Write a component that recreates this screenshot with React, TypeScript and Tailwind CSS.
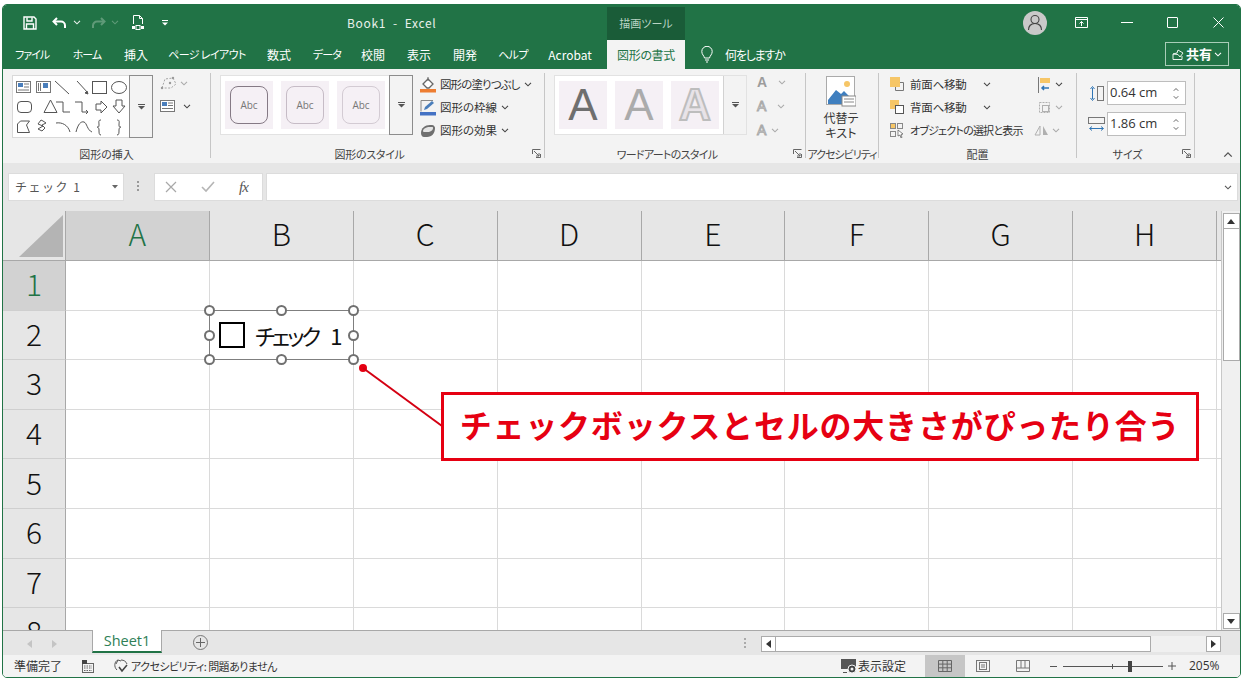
import React from 'react';

const Chev: React.FC<{ className?: string }> = ({ className }) => (
  <svg width="8" height="5" viewBox="0 0 8 5" className={className}><path d="M1 .8l3 3 3-3" fill="none" stroke="currentColor" strokeWidth="1.1" /></svg>
);

const MoreIcon = () => (
  <svg width="7" height="6" viewBox="0 0 7 6"><path d="M0 .5h7" stroke="#555" /><path d="M0 2h7L3.500 5.500z" fill="#555" /></svg>
);

const Launcher: React.FC<{ className?: string }> = ({ className }) => (
  <svg width="9" height="9" viewBox="0 0 9 9" className={className}><path d="M.5 5V.5H8.500M4 8.500h4.500V5" fill="none" stroke="#666" /><path d="M2 2l5 5M7 4v3H4" fill="none" stroke="#666" /></svg>
);

const tabs = [
  { label: 'ファイル', w: 'w-[58px] text-[11px] tracking-[-1px]' },
  { label: 'ホーム', w: 'w-[52px] text-[11px] tracking-[-1px]' },
  { label: '挿入', w: 'w-[46px]' },
  { label: 'ページ レイアウト', w: 'w-[96px] text-[11px] tracking-[-0.6px]' },
  { label: '数式', w: 'w-[48px]' },
  { label: 'データ', w: 'w-[48px] text-[11px] tracking-[-0.8px]' },
  { label: '校閲', w: 'w-[44px]' },
  { label: '表示', w: 'w-[48px]' },
  { label: '開発', w: 'w-[44px]' },
  { label: 'ヘルプ', w: 'w-[52px] text-[11px] tracking-[-0.6px]' },
  { label: 'Acrobat', w: 'w-[62px]' },
];

const TitleBar = () => (
  <div className="h-[35px] flex items-center bg-[#217346] text-white shrink-0">
    <svg width="14" height="14" viewBox="0 0 14 14" className="ml-[20px]"><path d="M1 1h10l2 2v10H1z" fill="none" stroke="#fff" strokeWidth="1.4" /><path d="M4 1.500v3.500h5V1.500M3.500 13V8h7v5" fill="none" stroke="#fff" strokeWidth="1.4" /></svg>
    <svg width="15" height="12" viewBox="0 0 15 12" className="ml-[15px]"><path d="M5 1L1.500 4.500 5 8" fill="none" stroke="#fff" strokeWidth="2" /><path d="M2 4.500h7a4 4 0 0 1 4 4V11" fill="none" stroke="#fff" strokeWidth="2" /></svg>
    <Chev className="ml-[6px] text-white/90" />
    <svg width="15" height="12" viewBox="0 0 15 12" className="ml-[10px]"><path d="M10 1l3.500 3.500L10 8" fill="none" stroke="#5f9a78" strokeWidth="2" /><path d="M13 4.500H6a4 4 0 0 0-4 4V11" fill="none" stroke="#5f9a78" strokeWidth="2" /></svg>
    <Chev className="ml-[5px] text-[#5f9a78]" />
    <svg width="14" height="16" viewBox="0 0 14 16" className="ml-[12px]"><path d="M2.500 9V.500h6l3 3V9" fill="none" stroke="#fff" /><path d="M8.500.500v3h3" fill="none" stroke="#fff" /><rect x="1" y="11" width="3" height="3" fill="#fff" /><rect x="5" y="10.500" width="4" height="4" fill="none" stroke="#fff" /><rect x="10" y="11" width="3" height="3" fill="#fff" /></svg>
    <svg width="6" height="6" viewBox="0 0 6 6" className="ml-[17px]"><path d="M0 .5h6" stroke="#fff" /><path d="M0 2.500h6L3 5.500z" fill="#fff" /></svg>
    <div className="ml-[179px] w-[89px] text-[12px] tracking-[0.7px] whitespace-nowrap text-[#e8f0eb]">Book1&nbsp; -&nbsp; Excel</div>
    <div className="ml-[171px] w-[78px] h-[33px] self-end bg-[#1a5c38] flex items-center justify-center text-[11px] text-[#b9d4c4]">描画ツール</div>
    <div className="ml-[338px] w-[24px] h-[24px] rounded-full bg-[#c9c9c9] flex items-center justify-center">
      <svg width="16" height="17" viewBox="0 0 16 17"><circle cx="8" cy="5.500" r="4" fill="none" stroke="#444" strokeWidth="1.1" /><path d="M1.500 16c0-4 2.500-6.500 6.500-6.500s6.500 2.500 6.500 6.500" fill="none" stroke="#444" strokeWidth="1.1" /></svg>
    </div>
    <svg width="13" height="11" viewBox="0 0 13 11" className="ml-[28px]"><path d="M.5.500h12v10H.500zM.5 2.500h12" fill="none" stroke="#fff" /><path d="M6.500 9V4.500M4.500 6.500l2-2 2 2" fill="none" stroke="#fff" /></svg>
    <div className="ml-[33px] w-[12px] h-px bg-white" />
    <div className="ml-[34px] w-[11px] h-[11px] border border-white rounded-[1px]" />
    <svg width="11" height="11" viewBox="0 0 11 11" className="ml-[35px]"><path d="M.5.500l10 10M10.500.500l-10 10" stroke="#fff" /></svg>
  </div>
);

const TabBar = () => (
  <div className="h-[29px] flex bg-[#217346] text-white text-[12px] shrink-0">
    {tabs.map((t) => (
      <div key={t.label} className={`${t.w} flex items-center justify-center whitespace-nowrap`}>{t.label}</div>
    ))}
    <div className="ml-[6px] w-[78px] bg-[#f3f3f3] text-[#217346] flex items-center justify-center tracking-[-0.3px]">図形の書式</div>
    <svg width="12" height="17" viewBox="0 0 12 17" className="ml-[16px] self-center"><path d="M3.500 12C3 9.500.8 8.500.8 5.500a5.200 5.200 0 0 1 10.400 0c0 3-2.200 4-2.700 6.500z" fill="none" stroke="#fff" /><path d="M4 14h4M5 16h2" stroke="#fff" /></svg>
    <div className="ml-[12px] self-center whitespace-nowrap tracking-[-1.200px]">何をしますか</div>
    <div className="ml-auto mr-[11px] mt-[2px] w-[64px] h-[24px] border border-[#a9cdb8] flex items-center justify-center gap-[2px]">
      <svg width="12" height="11" viewBox="0 0 12 11"><path d="M1 5v5.500h9V7M1 5l4-1 1-3 5 3-3 4-2-2.500z" fill="none" stroke="#fff" strokeWidth=".9" /></svg>
      <span className="text-[13px] font-bold">共有</span>
      <Chev className="text-white" />
    </div>
  </div>
);

const Group: React.FC<{ w: string; label: string; labelClass?: string; launcher?: boolean; children: React.ReactNode }> = ({ w, label, labelClass, launcher, children }) => (
  <div className={`${w} h-full flex flex-col shrink-0`}>
    <div className="h-[76px] flex">{children}</div>
    <div className={`h-[18px] flex items-center justify-center text-[11px] text-[#444] relative whitespace-nowrap ${launcher ? 'pr-[16px]' : ''} ${labelClass ?? ''}`}>
      {label}
      {launcher && <Launcher className="absolute right-[3px] top-[4px]" />}
    </div>
  </div>
);

const Sep = () => <div className="w-px h-[85px] mt-[4px] bg-[#c6c6c6] shrink-0" />;

const ShapeGallery = () => (
  <svg width="115" height="61" viewBox="0 0 115 61" className="shrink-0">
    <g fill="none" stroke="#555" strokeWidth="1">
      <rect x="3.500" y="5.500" width="14" height="11" stroke="#777" />
      <rect x="5" y="7" width="5" height="4" fill="#4a7ebb" stroke="none" />
      <path d="M11 8h5M11 11h5M5 14h11" stroke="#777" />
      <rect x="23.500" y="5.500" width="14" height="11" stroke="#777" />
      <rect x="30" y="7" width="5" height="5" fill="#4a7ebb" stroke="none" />
      <path d="M25.500 7v8M27.500 7v8" stroke="#777" />
      <path d="M42 5l14 13" />
      <path d="M64 5l11 12" />
      <path d="M75 18l-1-3-2 2z" fill="#555" />
      <rect x="79.500" y="5.500" width="14" height="12" />
      <ellipse cx="106" cy="11.500" rx="7.500" ry="6" />
      <rect x="4.500" y="25.500" width="14" height="11" rx="3.500" />
      <path d="M31 36.500h13L37.500 24z" />
      <path d="M43 26h7v10h7" />
      <path d="M62 26h7v10h6M73 34l2 2-2 2" />
      <path d="M83 28h5v-3l6 6-6 6v-3h-5z" />
      <path d="M103 24h6v6h3l-6 7-6-7h3z" />
      <path d="M4.500 56.500V48l3-3h9l-3 4 3 7.500z" />
      <path d="M28 44l-3 4 5 2-5 3 4 2 3-3-3-3 4-2-3-2z" />
      <path d="M43 47c6-1 12 2 14 9" />
      <path d="M63 56c2-8 5-11 8-10 3 1 3 8 8 10" />
      <path d="M88 44c-3 0-2 2-2 5s-2 2-2 2 2 0 2 3 0 5 2 5" />
      <path d="M104 44c3 0 2 2 2 5s2 2 2 2-2 0-2 3 0 5-2 5" />
    </g>
  </svg>
);

const MoreBtn: React.FC<{ w: string; strong?: boolean }> = ({ w, strong }) => (
  <div className={`${w} ${strong ? 'border border-[#8c8c8c]' : 'border-l border-[#d2d2d2]'} bg-[#f3f3f3] flex items-center justify-center shrink-0`}>
    <MoreIcon />
  </div>
);

const abcStyles = [
  { id: 1, border: 'border-[#857a85]' },
  { id: 2, border: 'border-[#c6bcc6]' },
  { id: 3, border: 'border-[#d3cbd3]' },
];

const ActionRow: React.FC<{ icon: React.ReactNode; label: string; textClass: string }> = ({ icon, label, textClass }) => (
  <div className="h-[23px] flex items-center text-[#333] whitespace-nowrap">
    <div className="w-[20px] flex justify-start">{icon}</div>
    <span className={textClass}>{label}</span>
    <Chev className="ml-[4px] text-[#444]" />
  </div>
);

const FrontIcon: React.FC<{ back?: boolean }> = ({ back }) => (
  <svg width="15" height="15" viewBox="0 0 15 15">
    {back ? (
      <>
        <rect x="0" y="0" width="9" height="9" fill="#f6c667" />
        <rect x="5.500" y="5.500" width="8" height="8" fill="#fff" stroke="#555" />
      </>
    ) : (
      <>
        <path d="M5.500 5.500h8v8h-8z" fill="none" stroke="#777" />
        <rect x="0" y="0" width="10" height="10" fill="#f6c667" />
      </>
    )}
  </svg>
);

const SizeInput: React.FC<{ value: string; icon: React.ReactNode }> = ({ value, icon }) => (
  <div className="h-[24px] flex items-center">
    <div className="w-[21px] flex justify-center">{icon}</div>
    <div className="w-[79px] h-[24px] bg-white border border-[#bdbdbd] flex items-center justify-between pl-[2px] pr-[5px] text-[13px] text-[#333] font-['Open_Sans',sans-serif]">
      <span>{value}</span>
      <div className="flex flex-col gap-[3px] text-[#444]">
        <Chev className="rotate-180 scale-75" />
        <Chev className="scale-75" />
      </div>
    </div>
  </div>
);

const Ribbon = () => (
  <div className="h-[94px] flex bg-[#f3f3f3] shrink-0">
    <Group w="w-[207px]" label="図形の挿入">
      <div className="pl-[9px] pt-[6px] flex">
        <div className="w-[141px] h-[63px] bg-white border border-[#d9d9d9] flex">
          <ShapeGallery />
          <MoreBtn w="w-[24px] h-[63px] -mt-px -mr-px ml-auto" strong />
        </div>
        <div className="ml-[7px] flex flex-col gap-[10px] pt-[1px]">
          <div className="flex items-center gap-[2px] text-[#aaa]">
            <svg width="18" height="14" viewBox="0 0 18 14"><path d="M2 12L5 3l8-1 3 6-5 4z" fill="none" stroke="#a6a6a6" strokeDasharray="2 1.500" /><circle cx="2" cy="12" r="1.200" fill="#999" /><circle cx="13" cy="2" r="1.200" fill="#999" /><circle cx="10" cy="7" r="1.200" fill="#999" /></svg>
            <Chev />
          </div>
          <div className="flex items-center gap-[8px] text-[#444]">
            <svg width="15" height="12" viewBox="0 0 15 12"><rect x=".5" y=".5" width="14" height="11" fill="#fff" stroke="#777" /><rect x="2" y="2" width="5" height="4" fill="#4a7ebb" /><path d="M8 3h5M8 5.500h5M2 8.500h11" stroke="#777" /></svg>
            <Chev />
          </div>
        </div>
      </div>
    </Group>
    <Sep />
    <Group w="w-[333px]" label="図形のスタイル" labelClass="tracking-[-0.3px]" launcher>
      <div className="pl-[9px] pt-[6px] flex">
        <div className="w-[193px] h-[60px] bg-white border border-[#e2e2e2] flex">
          <div className="flex gap-[8px] pl-[4px] pt-[5px] w-[169px]">
            {abcStyles.map((s) => (
              <div key={s.id} className="w-[48px] h-[48px] bg-[#f5f0f5] flex items-center justify-center">
                <div className={`w-[38px] h-[38px] rounded-[8px] border ${s.border} flex items-center justify-center text-[10px] text-[#777] font-['Open_Sans',sans-serif]`}>Abc</div>
              </div>
            ))}
          </div>
          <MoreBtn w="w-[24px] h-[60px] -mt-px -mr-px" strong />
        </div>
        <div className="ml-[7px] -mt-[2px] flex flex-col">
          <ActionRow label="図形の塗りつぶし" textClass="text-[11.500px] tracking-[-0.9px]" icon={<svg width="17" height="16" viewBox="0 0 17 16"><path d="M3 7l5-5 5 5-4 4H7z" fill="#fff" stroke="#666" strokeWidth="1.300" /><path d="M8 0v4" stroke="#666" /><rect x="0" y="12" width="16" height="3.500" fill="#ed7d31" /></svg>} />
          <ActionRow label="図形の枠線" textClass="text-[11.500px]" icon={<svg width="17" height="16" viewBox="0 0 17 16"><path d="M1 .5h12M1 .5v11" stroke="#888" /><path d="M4 10l1-3 7-6 2 2-7 6z" fill="#4a7ebb" /><rect x="0" y="12" width="16" height="3.500" fill="#4472c4" /></svg>} />
          <ActionRow label="図形の効果" textClass="text-[11.500px]" icon={<svg width="16" height="14" viewBox="0 0 16 14"><path d="M1 9c0-5 4-8 9-8h2c2 0 3 2 3 3 0 5-3 9-8 9H4c-2 0-3-2-3-4z" fill="#6f6f6f" /><path d="M3 7c0-2 3-4 7-4h2c1 0 1 .5 1 1 0 2-2 4-6 4H5C4 8 3 8 3 7z" fill="#e4e4e4" /></svg>} />
        </div>
      </div>
    </Group>
    <Sep />
    <Group w="w-[260px]" label="ワードアートのスタイル" labelClass="tracking-[-0.7px]" launcher>
      <div className="pl-[9px] pt-[6px] flex">
        <div className="w-[193px] h-[60px] bg-white border border-[#e2e2e2] flex">
          <div className="flex gap-[8px] pl-[4px] pt-[5px] w-[169px] font-['Liberation_Sans',sans-serif]">
            <div className="w-[48px] h-[48px] bg-[#f5f0f5] flex items-center justify-center text-[44px] leading-none text-[#6f6f6f]">A</div>
            <div className="w-[48px] h-[48px] bg-[#f5f0f5] flex items-center justify-center text-[44px] leading-none text-[#ababab]">A</div>
            <div className="w-[48px] h-[48px] bg-[#f5f0f5] flex items-center justify-center text-[44px] leading-none font-bold text-[#e8e3e8] [-webkit-text-stroke:2px_#bdbdbd]">A</div>
          </div>
          <MoreBtn w="w-[23px] h-[58px]" />
        </div>
        <div className="ml-[10px] -mt-[5px] flex flex-col font-['Liberation_Sans',sans-serif]">
          <div className="h-[24px] flex items-center text-[14px] font-bold text-[#9c9c9c]">A<Chev className="ml-[11px] text-[#aaa]" /></div>
          <div className="h-[24px] flex items-center text-[14px] text-[#f3f3f3] [-webkit-text-stroke:1px_#aaa]">A<Chev className="ml-[11px] text-[#aaa]" /></div>
          <div className="h-[24px] flex items-center text-[14px] text-[#f3f3f3] [-webkit-text-stroke:1px_#aaa]">A<Chev className="ml-[5px] text-[#aaa]" /></div>
        </div>
      </div>
    </Group>
    <Sep />
    <Group w="w-[72px]" label="アクセシビリティ" labelClass="tracking-[-1px]">
      <div className="w-full flex flex-col items-center pt-[7px] text-[12px] leading-[15px] text-[#333] -ml-[1px]">
        <svg width="30" height="31" viewBox="0 0 30 31" className="mb-[3px]">
          <rect x=".5" y=".5" width="28" height="28" fill="#fff" stroke="#aaa" />
          <circle cx="21" cy="8" r="3" fill="#f6c667" />
          <path d="M2 24l8-10 5 4 3-3 9 9v4H2z" fill="#3f7fbf" />
          <rect x="16" y="20" width="14" height="10" fill="#fff" stroke="#888" />
          <path d="M18 23h10M18 26h10" stroke="#888" />
        </svg>
        <span>代替テ</span>
        <span>キスト</span>
      </div>
    </Group>
    <Sep />
    <Group w="w-[197px]" label="配置">
      <div className="pl-[11px] flex flex-col w-full">
        <div className="h-[23px] mt-[4px] flex items-center text-[#333]">
          <FrontIcon />
          <span className="ml-[5px] w-[62px] whitespace-nowrap text-[11.500px] tracking-[-0.2px]">前面へ移動</span>
          <Chev className="ml-[11px] text-[#444]" />
          <svg width="13" height="16" viewBox="0 0 13 16" className="ml-[47px]"><path d="M.5 0v16" stroke="#777" /><rect x="2" y="1" width="10" height="5" fill="#f6c667" /><path d="M11 11H4M6 9l-2 2 2 2" fill="none" stroke="#2f75b5" strokeWidth="1.500" /></svg>
          <Chev className="ml-[4px] text-[#444]" />
        </div>
        <div className="h-[23px] flex items-center text-[#333]">
          <FrontIcon back />
          <span className="ml-[5px] w-[62px] whitespace-nowrap text-[11.500px] tracking-[-0.2px]">背面へ移動</span>
          <Chev className="ml-[11px] text-[#444]" />
          <svg width="15" height="15" viewBox="0 0 15 15" className="ml-[46px]"><rect x="2.500" y="2.500" width="10" height="10" fill="none" stroke="#b0b0b0" strokeDasharray="2 1" /><rect x="5.500" y="5.500" width="6" height="6" fill="none" stroke="#b0b0b0" /></svg>
          <Chev className="ml-[3px] text-[#aaa]" />
        </div>
        <div className="h-[23px] flex items-center text-[#333]">
          <svg width="15" height="15" viewBox="0 0 15 15"><rect x=".5" y=".5" width="5" height="5" fill="#f6c667" stroke="#888" /><rect x="7.500" y=".5" width="5" height="5" fill="none" stroke="#888" /><rect x=".5" y="8.500" width="5" height="5" fill="none" stroke="#888" /><path d="M8 7l5 4-2 .5 1 3-1 .5-1-3-2 1z" fill="#fff" stroke="#555" strokeWidth=".7" /></svg>
          <span className="ml-[5px] w-[115px] whitespace-nowrap text-[11px] tracking-[-0.8px]">オブジェクトの選択と表示</span>
          <svg width="16" height="11" viewBox="0 0 16 11" className="ml-[9px]"><path d="M6 1L1 10h5z" fill="none" stroke="#b0b0b0" /><path d="M9 1l5 9H9z" fill="#b0b0b0" /></svg>
          <Chev className="ml-[2px] text-[#aaa]" />
        </div>
      </div>
    </Group>
    <Sep />
    <Group w="w-[117px]" label="サイズ" launcher>
      <div className="pl-[9px] pt-[12px] flex flex-col gap-[7px]">
        <SizeInput value="0.64 cm" icon={<svg width="15" height="17" viewBox="0 0 15 17"><path d="M3.500 3v11M1.500 4l2-2.500 2 2.500M1.500 13l2 2.500 2-2.500" fill="none" stroke="#2f75b5" /><rect x="8.500" y="1.500" width="6" height="14" fill="none" stroke="#777" /></svg>} />
        <SizeInput value="1.86 cm" icon={<svg width="17" height="15" viewBox="0 0 17 15"><rect x=".5" y=".5" width="16" height="6" fill="none" stroke="#777" /><path d="M2 11.500h13M4 9.500l-2.500 2 2.500 2M13 9.500l2.500 2-2.500 2" fill="none" stroke="#2f75b5" /></svg>} />
      </div>
    </Group>
    <Sep />
    <div className="flex-1 flex items-end justify-end pr-[8px] pb-[6px] text-[#555]">
      <Chev className="rotate-180 scale-125" />
    </div>
  </div>
);

const FormulaBar = () => (
  <div className="h-[48px] flex items-start pt-[10px] bg-[#e6e6e6] shrink-0">
    <div className="ml-[5px] w-[116px] h-[28px] bg-white border border-[#dcdcdc] flex items-center justify-between pl-[6px] pr-[5px] text-[12px] tracking-[1.500px] text-[#555]">
      <span className="[font-feature-settings:normal] whitespace-nowrap">チェック 1</span>
      <svg width="6" height="4" viewBox="0 0 6 4"><path d="M0 0h6L3 3.500z" fill="#666" /></svg>
    </div>
    <div className="ml-[13px] mt-[8px] w-[2px] flex flex-col gap-[2px]">
      <div className="w-[2px] h-[2px] bg-[#999]" />
      <div className="w-[2px] h-[2px] bg-[#999]" />
      <div className="w-[2px] h-[2px] bg-[#999]" />
    </div>
    <div className="ml-[15px] w-[109px] h-[28px] bg-white border border-[#dcdcdc] flex items-center pl-[10px] gap-[24px]">
      <svg width="12" height="12" viewBox="0 0 12 12"><path d="M1 1l10 10M11 1L1 11" stroke="#a8a8a8" strokeWidth="1.200" /></svg>
      <svg width="14" height="12" viewBox="0 0 14 12"><path d="M1 6l4 4 8-9" fill="none" stroke="#b5b5b5" strokeWidth="1.600" /></svg>
      <span className="text-[15px] italic font-['Liberation_Serif',serif] text-[#555] tracking-[-1px]">fx</span>
    </div>
    <div className="ml-[3px] mr-[2px] flex-1 h-[28px] bg-white border border-[#dcdcdc] flex items-center justify-end pr-[5px] text-[#555]">
      <Chev />
    </div>
  </div>
);

const columns = ['A', 'B', 'C', 'D', 'E', 'F', 'G', 'H'];
const rowsList = [1, 2, 3, 4, 5, 6, 7, 8];

const SheetGrid = () => (
  <div className="flex-1 overflow-hidden grid grid-cols-[63px_repeat(8,143.875px)_1fr] grid-rows-[50px_repeat(8,49.6px)] text-[30px] font-light text-[#111]">
    <div className="bg-[#e6e6e6] border-r border-b border-[#a8a8a8] flex items-end justify-end pr-[2px] pb-[3px]">
      <svg width="44" height="42" viewBox="0 0 44 42"><path d="M44 0v42H0z" fill="#b4b4b4" /></svg>
    </div>
    {columns.map((c) => (
      <div key={c} className={`${c === 'A' ? 'bg-[#d2d2d2] text-[#217346]' : 'bg-[#e6e6e6]'} border-r border-b border-[#a8a8a8] flex items-center justify-center pb-[5px]`}>{c}</div>
    ))}
    <div className="bg-[#e6e6e6] border-b border-[#a8a8a8]" />
    {rowsList.map((r) => (
      <React.Fragment key={r}>
        <div className={`${r === 1 ? 'bg-[#d2d2d2] text-[#217346]' : 'bg-[#e6e6e6]'} border-r border-b border-r-[#a8a8a8] border-b-[#cfcfcf] flex items-center justify-center pb-[3px]`}>{r}</div>
        {columns.map((c) => (
          <div key={c} className="bg-white border-r border-b border-[#dadada]" />
        ))}
        <div className="bg-white border-b border-[#dadada]" />
      </React.Fragment>
    ))}
  </div>
);

const VScroll = () => (
  <div className="w-[19px] bg-[#f0f0f0] border-l border-[#c8c8c8] flex flex-col items-center pt-[2px] pb-[1px] shrink-0">
    <div className="w-[17px] h-[16px] bg-white border border-[#ababab] flex items-center justify-center">
      <svg width="8" height="5" viewBox="0 0 8 5"><path d="M0 5l4-5 4 5z" fill="#333" /></svg>
    </div>
    <div className="w-[17px] h-[133px] bg-white border border-[#ababab] -mt-px" />
    <div className="flex-1" />
    <div className="w-[17px] h-[16px] bg-white border border-[#ababab] flex items-center justify-center">
      <svg width="8" height="5" viewBox="0 0 8 5"><path d="M0 0l4 5 4-5z" fill="#333" /></svg>
    </div>
  </div>
);

const SheetBar = () => (
  <div className="h-[25px] flex bg-[#e6e6e6] border-t border-[#a8a8a8] shrink-0">
    <svg width="5" height="8" viewBox="0 0 5 8" className="ml-[24px] mt-[9px]"><path d="M5 0L0 4l5 4z" fill="#c4c4c4" /></svg>
    <svg width="5" height="8" viewBox="0 0 5 8" className="ml-[20px] mt-[9px]"><path d="M0 0l5 4-5 4z" fill="#c4c4c4" /></svg>
    <div className="ml-[35px] -mt-px w-[70px] h-[23px] bg-white border-x border-[#a8a8a8] border-b-2 border-b-[#217346] flex items-center justify-center text-[14.500px] text-[#2f7f57] font-['Open_Sans',sans-serif]">Sheet1</div>
    <div className="ml-[31px] mt-[4px] w-[15px] h-[15px] rounded-full border border-[#777] flex items-center justify-center">
      <svg width="9" height="9" viewBox="0 0 9 9"><path d="M4.500 0v9M0 4.500h9" stroke="#666" /></svg>
    </div>
    <div className="ml-[536px] mt-[7px] flex flex-col gap-[2px]">
      <div className="w-[2px] h-[2px] bg-[#aaa]" />
      <div className="w-[2px] h-[2px] bg-[#aaa]" />
      <div className="w-[2px] h-[2px] bg-[#aaa]" />
    </div>
    <div className="ml-[15px] mt-[5px] w-[460px] h-[16px] bg-[#f0f0f0] flex">
      <div className="w-[15px] bg-white border border-[#ababab] flex items-center justify-center">
        <svg width="5" height="8" viewBox="0 0 5 8"><path d="M5 0L0 4l5 4z" fill="#333" /></svg>
      </div>
      <div className="w-[376px] bg-white border border-[#ababab] -ml-px" />
      <div className="flex-1" />
      <div className="w-[15px] bg-white border border-[#ababab] flex items-center justify-center">
        <svg width="5" height="8" viewBox="0 0 5 8"><path d="M0 0l5 4-5 4z" fill="#333" /></svg>
      </div>
    </div>
  </div>
);

const StatusBar = () => (
  <div className="h-[22px] flex items-center bg-[#f3f3f3] text-[12px] text-[#333] shrink-0">
    <span className="ml-[11px] w-[48px] whitespace-nowrap">準備完了</span>
    <svg width="12" height="13" viewBox="0 0 12 13" className="ml-[20px]"><rect x=".5" y="3.500" width="11" height="9" fill="none" stroke="#666" /><rect x="0" y="0" width="5" height="4" fill="#444" /><path d="M2 6h8M2 8h8M2 10.500h8" stroke="#666" strokeDasharray="1.500 1" /></svg>
    <svg width="16" height="14" viewBox="0 0 16 14" className="ml-[19px]"><path d="M5 1C1.500 2 .5 8 4 11" fill="none" stroke="#555" /><path d="M8 1c3 0 5 1.500 6 4M3 5l2-4 3 1" fill="none" stroke="#555" /><path d="M6 8l3 4 5-6" fill="none" stroke="#444" strokeWidth="1.600" /></svg>
    <span className="ml-[2px] w-[145px] whitespace-nowrap text-[11px] tracking-[-0.55px]">アクセシビリティ: 問題ありません</span>
    <svg width="17" height="15" viewBox="0 0 17 15" className="ml-[565px]"><rect x="0" y="0" width="15" height="10" fill="#555" /><circle cx="11" cy="10" r="4" fill="#444" stroke="#f3f3f3" /><circle cx="11" cy="10" r="1.500" fill="#f3f3f3" /><path d="M2 13.500h4" stroke="#555" /></svg>
    <span className="w-[48px] whitespace-nowrap">表示設定</span>
    <div className="ml-[19px] w-[40px] h-full bg-[#c6c6c6] flex items-center justify-center">
      <svg width="14" height="12" viewBox="0 0 14 12"><path d="M.5.500h13v11H.500zM.5 4.100h13M.5 7.800h13M4.800.500v11M9.200.500v11" fill="none" stroke="#666" /></svg>
    </div>
    <svg width="14" height="12" viewBox="0 0 14 12" className="ml-[11px]"><rect x=".5" y=".5" width="13" height="11" fill="none" stroke="#777" /><rect x="3.500" y="2.500" width="7" height="7" fill="none" stroke="#777" /><path d="M5 5h4M5 7h4" stroke="#777" /></svg>
    <svg width="14" height="12" viewBox="0 0 14 12" className="ml-[26px]"><path d="M.5.500h13v11H.500zM.5 8h13M5 .500V8M9 .500V8" fill="none" stroke="#777" /></svg>
    <div className="ml-[20px] w-[7px] h-px bg-[#555]" />
    <div className="ml-[6px] w-[100px] h-px bg-[#555] relative">
      <div className="absolute left-[49px] -top-[2px] w-px h-[5px] bg-[#555]" />
      <div className="absolute left-[65px] -top-[5px] w-[4px] h-[11px] bg-[#444]" />
    </div>
    <svg width="8" height="8" viewBox="0 0 8 8" className="ml-[5px]"><path d="M4 0v8M0 4h8" stroke="#555" /></svg>
    <span className="ml-[13px] whitespace-nowrap font-['Open_Sans',sans-serif]">205%</span>
  </div>
);

const handles = [
  'left-[-6px] top-[-6px]',
  'left-[66px] top-[-6px]',
  'right-[-6px] top-[-6px]',
  'left-[-6px] top-[19px]',
  'right-[-6px] top-[19px]',
  'left-[-6px] bottom-[-6px]',
  'left-[66px] bottom-[-6px]',
  'right-[-6px] bottom-[-6px]',
];

const CheckControl = () => (
  <div className="absolute left-[209px] top-[310px] w-[145px] h-[50px] border border-[#7f7f7f] flex items-center pl-[9px]">
    <div className="w-[26px] h-[26px] border-2 border-black" />
    <span className="ml-[10px] text-[22px] text-[#111] whitespace-nowrap tracking-[-3px]">チェック</span>
    <span className="ml-[12px] text-[22px] text-[#111]">1</span>
    {handles.map((h) => (
      <div key={h} className={`absolute ${h} w-[11px] h-[11px] rounded-full bg-white border-2 border-[#707070]`} />
    ))}
  </div>
);

const Callout = () => (
  <>
    <svg width="90" height="70" viewBox="0 0 90 70" className="absolute left-[355px] top-[360px]">
      <circle cx="8" cy="8" r="4" fill="#e60012" />
      <path d="M8 8l79 58" stroke="#d40012" strokeWidth="2" />
    </svg>
    <div className="absolute left-[441px] top-[392px] w-[758px] h-[69px] bg-white border-[3px] border-[#e60012] flex items-center justify-center pb-[6px] text-[#e60012] text-[32px] font-bold tracking-[0.8px] whitespace-nowrap [font-feature-settings:normal]">
      チェックボックスとセルの大きさがぴったり合う
    </div>
  </>
);

export default function App() {
  return (
    <div className="relative w-[1248px] h-[683px] overflow-hidden bg-white pl-[2px] pt-[4px] font-['Noto_Sans_CJK_JP',sans-serif] [font-feature-settings:'palt']">
      <div className="w-[1239px] h-[674px] border border-[#217346] rounded-[5px] overflow-hidden flex flex-col">
        <TitleBar />
        <TabBar />
        <Ribbon />
        <FormulaBar />
        <div className="h-[419px] flex shrink-0">
          <SheetGrid />
          <VScroll />
        </div>
        <SheetBar />
        <StatusBar />
      </div>
      <CheckControl />
      <Callout />
    </div>
  );
}
